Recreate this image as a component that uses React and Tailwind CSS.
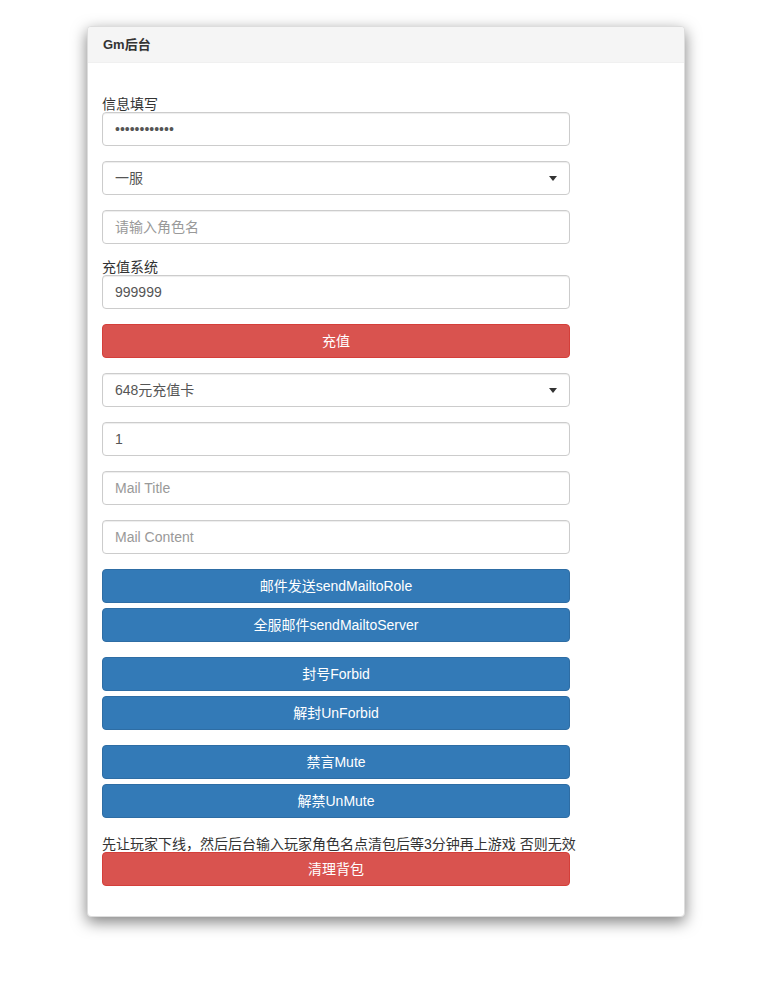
import { useState } from 'react';

const font = { fontFamily: '"Liberation Sans", Arial, "Noto Sans CJK SC", sans-serif' };

const inputCls =
  'block w-full h-[34px] px-3 text-[14px] text-[#555] bg-white border border-[#ccc] rounded-[4px] shadow-[inset_0_1px_1px_rgba(0,0,0,0.075)] outline-none placeholder:text-[#999]';

function Select({ value, options }) {
  return (
    <div className="relative">
      <select defaultValue={value} className={inputCls + ' appearance-none pr-8'} style={font}>
        {options.map((o) => (
          <option key={o}>{o}</option>
        ))}
      </select>
      <span className="pointer-events-none absolute right-[13px] top-[15px] w-0 h-0 border-l-[4px] border-r-[4px] border-t-[5px] border-l-transparent border-r-transparent border-t-[#333]" />
    </div>
  );
}

function Btn({ red, children, className = '' }) {
  return (
    <button
      className={
        'block w-full h-[34px] text-[14px] text-white rounded-[4px] border ' +
        (red ? 'bg-[#d9534f] border-[#d43f3a] ' : 'bg-[#337ab7] border-[#2e6da4] ') +
        className
      }
      style={font}
    >
      {children}
    </button>
  );
}

export default function App() {
  const [pwd] = useState('123456789012');

  return (
    <div className="bg-white min-h-[997px] pt-[26px]" style={font}>
      <div className="ml-[87px] w-[598px] bg-white border border-[#ddd] rounded-[4px] shadow-[0_5px_15px_rgba(0,0,0,0.5)] overflow-hidden">
        <div className="h-[36px] bg-[#f5f5f5] border-b border-[#f0f0f0] px-[15px] flex items-center text-[13px] font-bold text-[#333]">
          Gm后台
        </div>
        <div className="px-[14px] pt-[33px] pb-[30px] text-[14px] text-[#333]">
          <div className="w-[468px]">
            <div className="leading-[16px] h-[16px] whitespace-nowrap">信息填写</div>
            <input type="password" defaultValue={pwd} className={inputCls} style={font} />

            <div className="mt-[15px]">
              <Select value="一服" options={['一服', '二服', '三服']} />
            </div>
            <input placeholder="请输入角色名" className={inputCls + ' mt-[15px]'} style={font} />

            <div className="mt-[15px] leading-[16px] h-[16px] whitespace-nowrap">充值系统</div>
            <input defaultValue="999999" className={inputCls} style={font} />

            <Btn red className="mt-[15px]">充值</Btn>

            <div className="mt-[15px]">
              <Select value="648元充值卡" options={['648元充值卡', '328元充值卡', '198元充值卡']} />
            </div>
            <input defaultValue="1" className={inputCls + ' mt-[15px]'} style={font} />
            <input placeholder="Mail Title" className={inputCls + ' mt-[15px]'} style={font} />
            <input placeholder="Mail Content" className={inputCls + ' mt-[15px]'} style={font} />

            <Btn className="mt-[15px]">邮件发送sendMailtoRole</Btn>
            <Btn className="mt-[5px]">全服邮件sendMailtoServer</Btn>

            <Btn className="mt-[15px]">封号Forbid</Btn>
            <Btn className="mt-[5px]">解封UnForbid</Btn>

            <Btn className="mt-[15px]">禁言Mute</Btn>
            <Btn className="mt-[5px]">解禁UnMute</Btn>

            <div className="mt-[18px] leading-[16px] h-[16px] whitespace-nowrap">
              先让玩家下线，然后后台输入玩家角色名点清包后等3分钟再上游戏 否则无效
            </div>
            <Btn red>清理背包</Btn>
          </div>
        </div>
      </div>
    </div>
  );
}
